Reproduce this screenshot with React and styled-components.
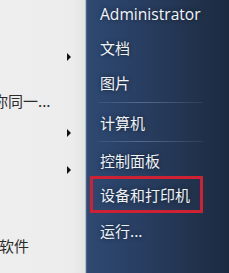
import React from 'react'
import styled, { createGlobalStyle } from 'styled-components'

const GlobalStyle = createGlobalStyle`
  html, body {
    margin: 0;
    padding: 0;
    width: 229px;
    height: 273px;
    overflow: hidden;
    background: #ececec;
  }
`

const Menu = styled.div`
  display: flex;
  width: 229px;
  height: 273px;
  overflow: hidden;
  font-family: "Noto Sans CJK SC", "Noto Sans", sans-serif;
`

const Programs = styled.div`
  display: flex;
  flex-direction: column;
  width: 85px;
  flex: none;
  background: linear-gradient(90deg, #eeeeee 0%, #ececec 85%, #e2e3e4 100%);
  border-right: 1px solid #b9bec6;
  overflow: hidden;
`

const ProgramRow = styled.div`
  display: flex;
  align-items: center;
  justify-content: space-between;
  height: ${p => p.$h}px;
  flex: none;
  padding-right: 14px;
`

const ProgramName = styled.span`
  font-size: 15px;
  color: #2b2b2b;
  white-space: nowrap;
  margin-left: ${p => p.$shift || 0}px;
`

const Arrow = styled.span`
  margin-left: auto;
  width: 0;
  height: 0;
  border-top: 4px solid transparent;
  border-bottom: 4px solid transparent;
  border-left: 4px solid #111;
`

const Places = styled.div`
  flex: 1;
  display: flex;
  flex-direction: column;
  border-left: 1px solid #4a6189;
  background:
    radial-gradient(ellipse 40px 30px at 190px 150px, rgba(60, 85, 120, 0.35), transparent),
    linear-gradient(90deg, #2e4972 0%, #293f63 35%, #22344f 70%, #1c2a41 100%);
`

const UserName = styled.div`
  height: 27px;
  display: flex;
  align-items: center;
  padding-left: 13px;
  font-family: "Open Sans", "Noto Sans", sans-serif;
  font-size: 15.6px;
  color: #f2f5f9;
  text-shadow: 0 0 4px rgba(0, 0, 0, 0.5);
`

const Place = styled.div`
  height: 35px;
  display: flex;
  align-items: center;
  padding-left: 13px;
  font-size: 15px;
  color: #eef2f7;
  text-shadow: 0 0 4px rgba(0, 0, 0, 0.55);
  box-sizing: border-box;
  ${p => p.$marked && `
    margin: -2px 26px 0 3px;
    padding-left: 7px;
    height: 37px;
    border: 3px solid #cc2233;
  `}
`

const Separator = styled.div`
  height: 1px;
  margin: ${p => p.$gap || 1}px 26px ${p => p.$gap || 1}px 11px;
  background: linear-gradient(90deg, rgba(160, 180, 210, 0.1), rgba(170, 190, 220, 0.35) 40%, rgba(160, 180, 210, 0.1));
`

const places = [
  { label: '文档' },
  { label: '图片' },
  { sep: true, gap: 2 },
  { label: '计算机' },
  { sep: true, gap: 0 },
  { label: '控制面板' },
  { label: '设备和打印机', marked: true },
  { label: '运行...' },
]

const App = () => (
  <Menu>
    <GlobalStyle />
    <Programs>
      <ProgramRow $h={39} />
      <ProgramRow $h={36}><Arrow /></ProgramRow>
      <ProgramRow $h={50}>
        <ProgramName $shift={-7}>你同一...</ProgramName>
      </ProgramRow>
      <ProgramRow $h={16}><Arrow /></ProgramRow>
      <ProgramRow $h={58}><Arrow /></ProgramRow>
      <ProgramRow $h={92}>
        <ProgramName $shift={-1}>软件</ProgramName>
      </ProgramRow>
    </Programs>
    <Places>
      <UserName>Administrator</UserName>
      <div style={{ height: 3 }} />
      {places.map((p, i) =>
        p.sep
          ? <Separator key={i} $gap={p.gap} />
          : <Place key={i} $marked={p.marked}>{p.label}</Place>
      )}
    </Places>
  </Menu>
)

export default App
